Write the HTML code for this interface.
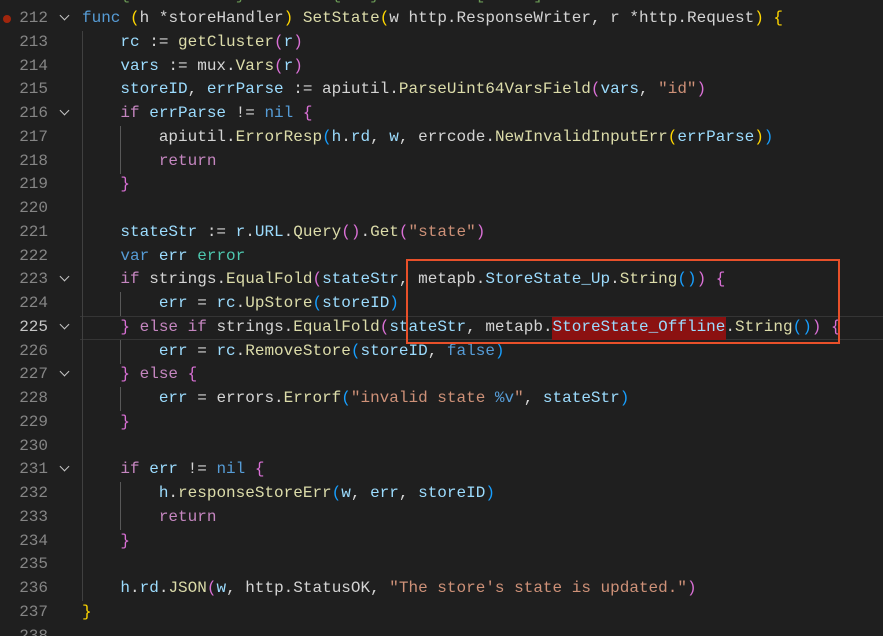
<!DOCTYPE html>
<html><head><meta charset="utf-8"><style>
html,body{margin:0;padding:0;background:#1f1f1f;width:883px;height:636px;overflow:hidden}
.ed{position:relative;width:883px;height:636px;font-family:"Liberation Mono","DejaVu Sans Mono",monospace;font-size:16px}
.ln{position:absolute;left:0;height:23.75px;line-height:23.75px;white-space:pre;width:883px}
.num{position:absolute;left:0;width:48px;text-align:right;color:#858585}
.code{position:absolute;left:82px;color:#d4d4d4}
.fold{position:absolute;left:61px;top:5px;width:6px;height:6px;border-right:1.5px solid #c5c5c5;border-bottom:1.5px solid #c5c5c5;transform:rotate(45deg)}
.guide{position:absolute;width:1px;background:#404040}
.v{color:#9cdcfe}.f{color:#dcdcaa}.k{color:#569cd6}.c{color:#c586c0}.s{color:#ce9178}.t{color:#4ec9b0}.w{color:#d4d4d4}
.b1{color:#ffd700}.b2{color:#da70d6}.b3{color:#179fff}
</style></head><body><div class="ed">
<div class="ln" style="top:-16px"><span class="code" style="color:#6a9955">//  {           }       / {   }  /       [     ]</span></div>
<div style="position:absolute;left:3px;top:15px;width:8px;height:8px;border-radius:50%;background:#a1260d"></div>
<div style="position:absolute;left:80px;top:316px;width:803px;height:22px;border-top:1px solid #353535;border-bottom:1px solid #353535"></div>
<div class="guide" style="left:82px;top:31px;height:570px"></div>
<div class="guide" style="left:120px;top:126px;height:48px;background:#585858"></div>
<div class="guide" style="left:120px;top:292px;height:24px;background:#585858"></div>
<div class="guide" style="left:120px;top:340px;height:24px;background:#585858"></div>
<div class="guide" style="left:120px;top:387px;height:24px;background:#585858"></div>
<div class="guide" style="left:120px;top:482px;height:48px;background:#585858"></div>
<div style="position:absolute;left:552px;top:317px;width:174px;height:23px;background:#8b1111"></div>
<div class="ln" style="top:7px"><span class="num">212</span><span class="fold"></span><span class="code"><span class="k">func</span> <span class="b1">(</span><span class="w">h</span> *<span class="w">storeHandler</span><span class="b1">)</span> <span class="f">SetState</span><span class="b1">(</span><span class="w">w</span> <span class="w">http</span>.<span class="w">ResponseWriter</span>, <span class="w">r</span> *<span class="w">http</span>.<span class="w">Request</span><span class="b1">)</span> <span class="b1">{</span></span></div>
<div class="ln" style="top:30.75px"><span class="num">213</span><span class="code">    <span class="v">rc</span> := <span class="f">getCluster</span><span class="b2">(</span><span class="v">r</span><span class="b2">)</span></span></div>
<div class="ln" style="top:54.5px"><span class="num">214</span><span class="code">    <span class="v">vars</span> := <span class="w">mux</span>.<span class="f">Vars</span><span class="b2">(</span><span class="v">r</span><span class="b2">)</span></span></div>
<div class="ln" style="top:78.25px"><span class="num">215</span><span class="code">    <span class="v">storeID</span>, <span class="v">errParse</span> := <span class="w">apiutil</span>.<span class="f">ParseUint64VarsField</span><span class="b2">(</span><span class="v">vars</span>, <span class="s">"id"</span><span class="b2">)</span></span></div>
<div class="ln" style="top:102px"><span class="num">216</span><span class="fold"></span><span class="code">    <span class="c">if</span> <span class="v">errParse</span> != <span class="k">nil</span> <span class="b2">{</span></span></div>
<div class="ln" style="top:125.75px"><span class="num">217</span><span class="code">        <span class="w">apiutil</span>.<span class="f">ErrorResp</span><span class="b3">(</span><span class="v">h</span>.<span class="v">rd</span>, <span class="v">w</span>, <span class="w">errcode</span>.<span class="f">NewInvalidInputErr</span><span class="b1">(</span><span class="v">errParse</span><span class="b1">)</span><span class="b3">)</span></span></div>
<div class="ln" style="top:149.5px"><span class="num">218</span><span class="code">        <span class="c">return</span></span></div>
<div class="ln" style="top:173.25px"><span class="num">219</span><span class="code">    <span class="b2">}</span></span></div>
<div class="ln" style="top:197px"><span class="num">220</span></div>
<div class="ln" style="top:220.75px"><span class="num">221</span><span class="code">    <span class="v">stateStr</span> := <span class="v">r</span>.<span class="v">URL</span>.<span class="f">Query</span><span class="b2">()</span>.<span class="f">Get</span><span class="b2">(</span><span class="s">"state"</span><span class="b2">)</span></span></div>
<div class="ln" style="top:244.5px"><span class="num">222</span><span class="code">    <span class="k">var</span> <span class="v">err</span> <span class="t">error</span></span></div>
<div class="ln" style="top:268.25px"><span class="num">223</span><span class="fold"></span><span class="code">    <span class="c">if</span> <span class="w">strings</span>.<span class="f">EqualFold</span><span class="b2">(</span><span class="v">stateStr</span>, <span class="w">metapb</span>.<span class="v">StoreState_Up</span>.<span class="f">String</span><span class="b3">()</span><span class="b2">)</span> <span class="b2">{</span></span></div>
<div class="ln" style="top:292px"><span class="num">224</span><span class="code">        <span class="v">err</span> = <span class="v">rc</span>.<span class="f">UpStore</span><span class="b3">(</span><span class="v">storeID</span><span class="b3">)</span></span></div>
<div class="ln" style="top:315.75px"><span class="num" style="color:#c6c6c6">225</span><span class="fold"></span><span class="code">    <span class="b2">}</span> <span class="c">else if</span> <span class="w">strings</span>.<span class="f">EqualFold</span><span class="b2">(</span><span class="v">stateStr</span>, <span class="w">metapb</span>.<span class="v">StoreState_Offline</span>.<span class="f">String</span><span class="b3">()</span><span class="b2">)</span> <span class="b2">{</span></span></div>
<div class="ln" style="top:339.5px"><span class="num">226</span><span class="code">        <span class="v">err</span> = <span class="v">rc</span>.<span class="f">RemoveStore</span><span class="b3">(</span><span class="v">storeID</span>, <span class="k">false</span><span class="b3">)</span></span></div>
<div class="ln" style="top:363.25px"><span class="num">227</span><span class="fold"></span><span class="code">    <span class="b2">}</span> <span class="c">else</span> <span class="b2">{</span></span></div>
<div class="ln" style="top:387px"><span class="num">228</span><span class="code">        <span class="v">err</span> = <span class="w">errors</span>.<span class="f">Errorf</span><span class="b3">(</span><span class="s">"invalid state </span><span class="k">%v</span><span class="s">"</span>, <span class="v">stateStr</span><span class="b3">)</span></span></div>
<div class="ln" style="top:410.75px"><span class="num">229</span><span class="code">    <span class="b2">}</span></span></div>
<div class="ln" style="top:434.5px"><span class="num">230</span></div>
<div class="ln" style="top:458.25px"><span class="num">231</span><span class="fold"></span><span class="code">    <span class="c">if</span> <span class="v">err</span> != <span class="k">nil</span> <span class="b2">{</span></span></div>
<div class="ln" style="top:482px"><span class="num">232</span><span class="code">        <span class="v">h</span>.<span class="f">responseStoreErr</span><span class="b3">(</span><span class="v">w</span>, <span class="v">err</span>, <span class="v">storeID</span><span class="b3">)</span></span></div>
<div class="ln" style="top:505.75px"><span class="num">233</span><span class="code">        <span class="c">return</span></span></div>
<div class="ln" style="top:529.5px"><span class="num">234</span><span class="code">    <span class="b2">}</span></span></div>
<div class="ln" style="top:553.25px"><span class="num">235</span></div>
<div class="ln" style="top:577px"><span class="num">236</span><span class="code">    <span class="v">h</span>.<span class="v">rd</span>.<span class="f">JSON</span><span class="b2">(</span><span class="v">w</span>, <span class="w">http</span>.<span class="w">StatusOK</span>, <span class="s">"The store's state is updated."</span><span class="b2">)</span></span></div>
<div class="ln" style="top:600.75px"><span class="num">237</span><span class="code"><span class="b1">}</span></span></div>
<div class="ln" style="top:624.5px"><span class="num">238</span></div>
<div style="position:absolute;left:406px;top:259px;width:430px;height:81px;border:2.5px solid #e8502a"></div>
</div></body></html>
